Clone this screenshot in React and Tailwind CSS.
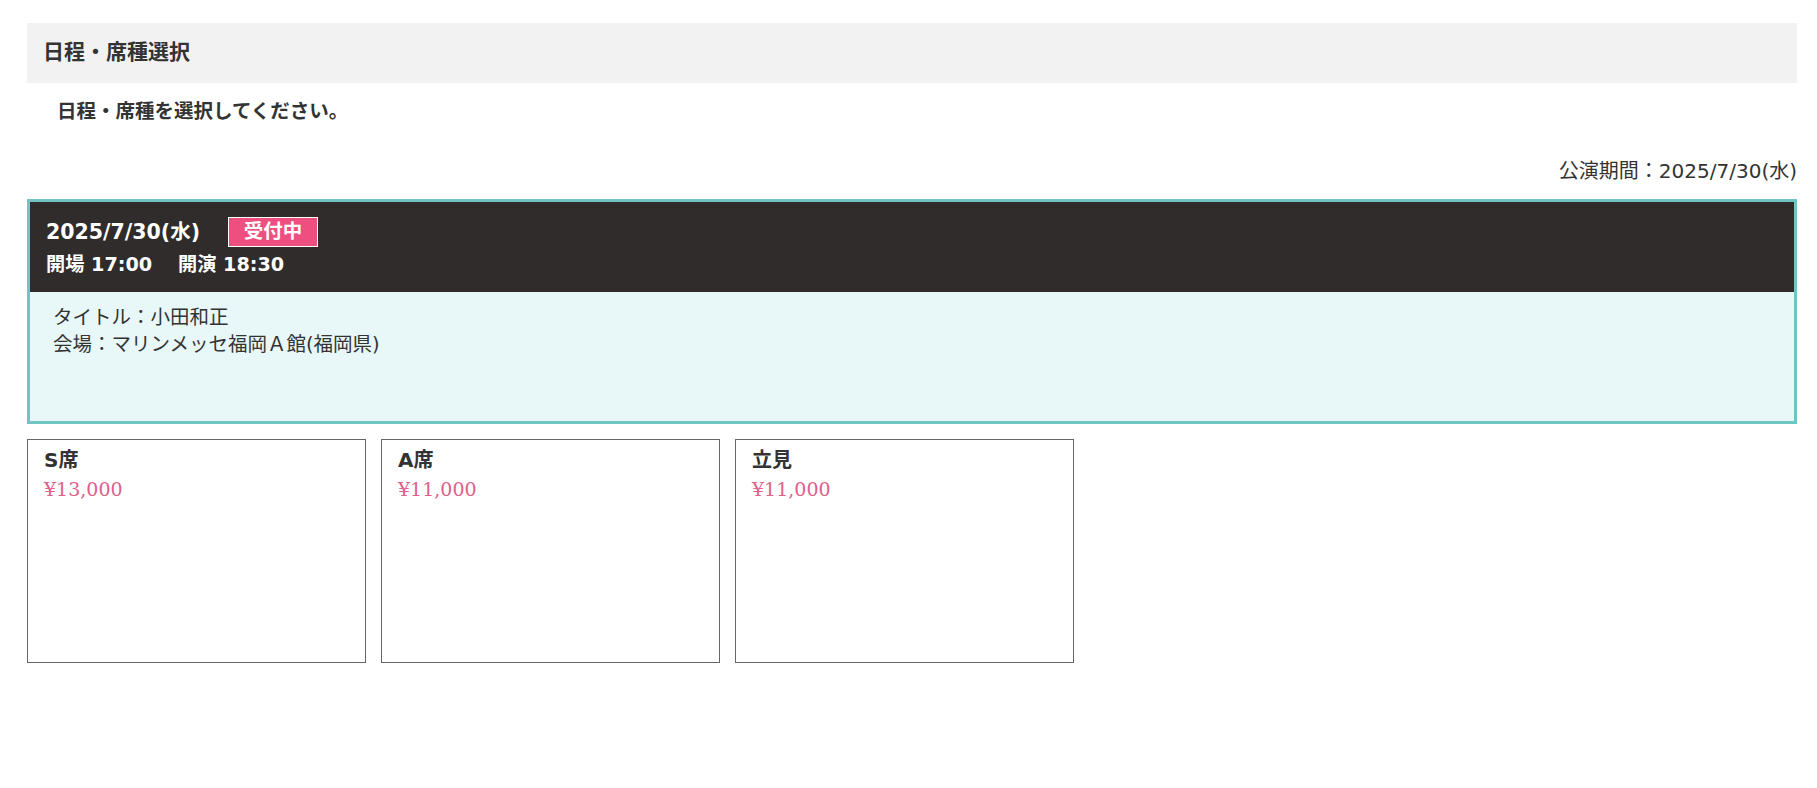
import React from "react";

const FONT = { fontFamily: '"DejaVu Sans", "Noto Sans CJK JP", sans-serif' };
const SERIF = { fontFamily: '"DejaVu Serif", "Noto Serif CJK JP", serif' };

function SeatBox({ name, price }) {
  return (
    <div className="w-[339px] h-[224px] border border-[#666666] bg-white pl-[16px] pt-[7px]">
      <div className="text-[20px] leading-[27px] font-bold text-[#333333]">{name}</div>
      <div className="text-[19px] leading-[30px] text-[#e0608a]" style={SERIF}>
        {price}
      </div>
    </div>
  );
}

export default function App() {
  return (
    <div className="w-[1817px] min-h-[788px] bg-white pt-[23px] text-[#333333]" style={FONT}>
      <div className="ml-[27px] w-[1770px]">
        <div className="h-[60px] bg-[#f2f2f2] pl-[16px] flex items-center text-[21px] font-bold text-[#333333]">
          日程・席種選択
        </div>
        <div className="mt-[15px] pl-[30px] text-[19.5px] leading-[27px] font-bold text-[#333333]">
          日程・席種を選択してください。
        </div>
        <div className="mt-[33px] text-right text-[20px] leading-[27px] text-[#333333]">
          公演期間：2025/7/30(水)
        </div>
        <div className="mt-[14px] border-[3px] border-[#70c4c4]">
          <div className="h-[90px] bg-[#302c2b] pl-[16px] pt-[15px] text-white font-bold">
            <div className="flex items-center h-[30px]">
              <span className="text-[20.5px] leading-[30px]">2025/7/30(水)</span>
              <span className="ml-[28px] w-[90px] h-[30px] bg-[#ef4f80] border border-white flex items-center justify-center text-[19.5px] leading-none">
                受付中
              </span>
            </div>
            <div className="mt-[4px] text-[19.2px] leading-[27px] whitespace-pre">
              開場 17:00　 開演 18:30
            </div>
          </div>
          <div className="h-[129px] bg-[#e8f7f7] pl-[23px] pt-[12px] text-[19.5px] leading-[27px] text-[#333333]">
            <div>タイトル：小田和正</div>
            <div>会場：マリンメッセ福岡Ａ館(福岡県)</div>
          </div>
        </div>
        <div className="mt-[15px] flex gap-[15px]">
          <SeatBox name="S席" price="¥13,000" />
          <SeatBox name="A席" price="¥11,000" />
          <SeatBox name="立見" price="¥11,000" />
        </div>
      </div>
    </div>
  );
}
